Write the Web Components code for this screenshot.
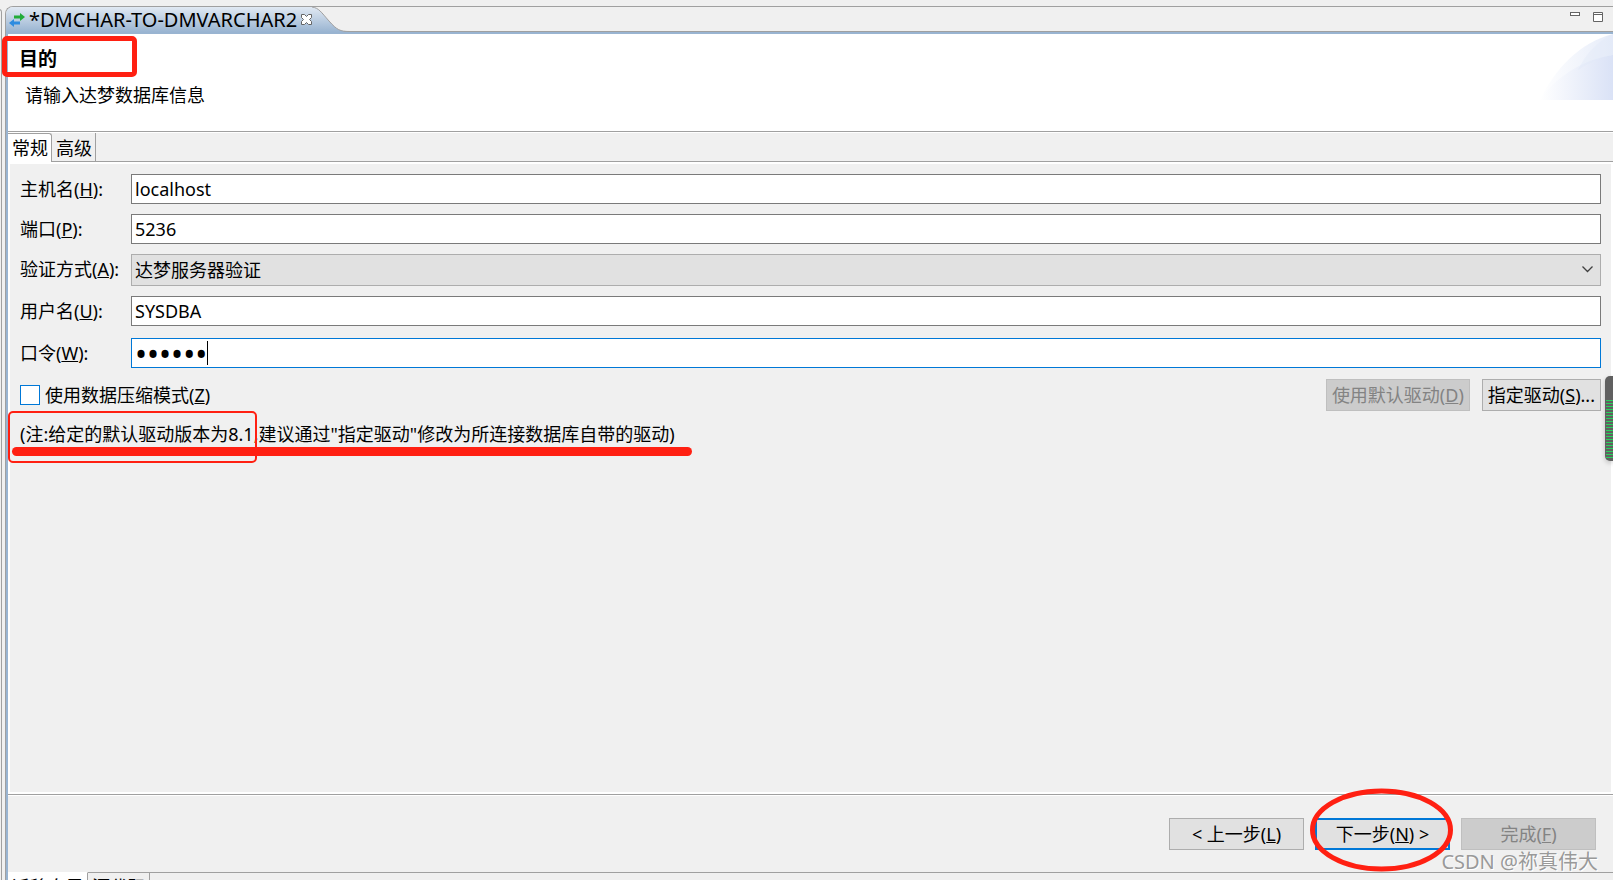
<!DOCTYPE html>
<html lang="zh-CN">
<head>
<meta charset="utf-8">
<title>DMCHAR-TO-DMVARCHAR2</title>
<style>
    html, body { height: 100%; }
    body {
        margin: 0;
        overflow: hidden;
        background: #f0f0f0;
        color: #000;
        font: 18px/24px "Noto Sans", "Noto Sans CJK SC", sans-serif;
    }
</style>
</head>
<body>
<wizard-window>
    <editor-tab slot="tab">*DMCHAR-TO-DMVARCHAR2</editor-tab>
    <wizard-header slot="header">
        <span slot="title">目的</span>
        请输入达梦数据库信息
    </wizard-header>
    <page-tabs slot="tabs"></page-tabs>
    <connection-form></connection-form>
    <wizard-footer slot="footer"></wizard-footer>
    <bottom-tabs slot="bottom"></bottom-tabs>
</wizard-window>

<script>
    class BaseElement extends HTMLElement {
        constructor() {
            super();
            this.attachShadow({ mode: 'open' });
            this.shadowRoot.innerHTML = this.render();
        }
    }

    class WizardWindow extends BaseElement {
        render() {
            return `
                <style>
                    :host {
                        display: flex;
                        position: relative;
                        height: 100%;
                        padding-top: 6px;
                        box-sizing: border-box;
                        overflow: hidden;
                    }
                    .edge {
                        width: 4px;
                        flex: none;
                        margin: 3px 0 0 -1px;
                        border-right: 1px solid #f0f0f0;
                        box-sizing: border-box;
                    }
                    .edge::before {
                        content: '';
                        display: block;
                        height: 100%;
                        border: 1px solid #a0a0a0;
                        border-left: 0;
                        border-radius: 0 4px 0 0;
                    }
                    .main {
                        flex: 1;
                        min-width: 0;
                        display: flex;
                        flex-direction: column;
                        margin-left: 2px;
                        border: 1px solid #a0a0a0;
                        border-width: 1px 0 0 1px;
                        border-radius: 8px 0 0 0;
                    }
                    .bar {
                        display: flex;
                        height: 25px;
                        justify-content: space-between;
                        box-shadow: inset 0 -1px #a0a0a0;
                    }
                    .tools {
                        display: flex;
                        gap: 13px;
                        padding: 5px 10px 0 0;
                    }
                    .frame {
                        flex: 1;
                        min-height: 0;
                        display: flex;
                        flex-direction: column;
                        border: solid #99b4d1;
                        border-width: 2px 0 0 2px;
                    }
                    .body {
                        flex: 1;
                        border: 2px solid #fff;
                    }
                    .grip {
                        position: absolute;
                        right: 0;
                        top: 376px;
                        width: 8px;
                        height: 85px;
                        box-sizing: border-box;
                        border-radius: 5px 0 0 5px;
                        padding: 24px 0 3px 1px;
                        background: #606060;
                        box-shadow: 0 2px 5px #0003;
                    }
                    .grip::before {
                        content: '';
                        display: block;
                        height: 100%;
                        background: repeating-linear-gradient(#28d05c 0 1px, #606060 1px 3px);
                    }
                </style>
                <div class="edge"></div>
                <div class="main">
                    <div class="bar">
                        <slot name="tab"></slot>
                        <div class="tools">
                            <svg width="10" height="10"><rect x=".5" y=".5" width="9" height="3" fill="#fff" stroke="#646464"/></svg>
                            <svg width="10" height="10"><path d="M.5.5h9v9h-9zM.5 2.500h9" fill="#fff" stroke="#646464"/></svg>
                        </div>
                    </div>
                    <div class="frame">
                        <slot name="header"></slot>
                        <slot name="tabs"></slot>
                        <div class="body"><slot></slot></div>
                        <slot name="footer"></slot>
                        <slot name="bottom"></slot>
                    </div>
                </div>
                <div class="grip"></div>
            `;
        }
    }

    class EditorTab extends BaseElement {
        render() {
            return `
                <style>
                    :host { display: flex; height: 25px; font-size: 20px; line-height: 22px; }
                    .label {
                        display: flex;
                        align-items: center;
                        gap: 4px;
                        padding-left: 3px;
                        border-radius: 7px 0 0 0;
                        background: linear-gradient(#e1e9f3, #99b4d1);
                        white-space: nowrap;
                    }
                    .curve { display: block; }
                </style>
                <div class="label">
                    <svg width="16" height="14" viewBox="0 0 16 14">
                        <path d="M5 2.500h6V0l5 4-5 4V5.500H5z" fill="#22ac38"/>
                        <path d="M11 8.500H5V6L0 10l5 4v-2.500h6z" fill="#2e8ce0"/>
                    </svg>
                    <span><slot></slot></span>
                    <svg width="11" height="11" viewBox="0 0 11 11">
                        <path d="M.5.5h3l2 2 2-2h3v3l-2 2 2 2v3h-3l-2-2-2 2h-3v-3l2-2-2-2z" fill="#fff" stroke="#646464"/>
                    </svg>
                </div>
                <svg class="curve" width="38" height="25" viewBox="0 0 38 25">
                    <defs>
                        <linearGradient id="g" x2="0" y2="1"><stop stop-color="#e1e9f3"/><stop offset="1" stop-color="#99b4d1"/></linearGradient>
                    </defs>
                    <path d="M0 0C7 1 9 5 17 14C25 23 28 24.500 38 24.500V25H0z" fill="url(#g)"/>
                    <path d="M0 0C7 1 9 5 17 14C25 23 28 24.500 38 24.500" fill="none" stroke="#a0a0a0"/>
                </svg>
            `;
        }
    }

    class WizardHeader extends BaseElement {
        render() {
            return `
                <style>
                    :host {
                        display: block;
                        position: relative;
                        height: 97px;
                        background: #fff;
                        border-bottom: 1px solid #a0a0a0;
                    }
                    h1 {
                        margin: 0;
                        padding: 13px 0 0 11px;
                        font-size: 19px;
                        line-height: 24px;
                    }
                    p { margin: 0; padding: 12px 0 0 17px; }
                    .mark {
                        position: absolute;
                        left: -6px;
                        top: 2px;
                        width: 135px;
                        height: 41px;
                        box-sizing: border-box;
                        border: 5px solid #ff2012;
                        border-radius: 5px;
                        z-index: 1;
                    }
                    .banner { position: absolute; right: 0; top: 0; }
                </style>
                <h1><slot name="title"></slot></h1>
                <p><slot></slot></p>
                <div class="mark"></div>
                <svg class="banner" width="73" height="66" viewBox="0 0 73 66">
                    <defs>
                        <linearGradient id="a"><stop stop-color="#fff"/><stop offset="1" stop-color="#e6ecf9"/></linearGradient>
                        <linearGradient id="b"><stop stop-color="#fff"/><stop offset="1" stop-color="#dae2f6"/></linearGradient>
                    </defs>
                    <path d="M0 66C14 36 40 8 73 0V66z" fill="url(#a)"/>
                    <path d="M0 66C18 40 46 25 73 21V66z" fill="url(#b)"/>
                    <path d="M38 36C46 20 56 8 73 0V21Q54 25 38 36z" fill="#e2e9f8" opacity=".4"/>
                </svg>
            `;
        }
    }

    class PageTabs extends BaseElement {
        render() {
            return `
                <style>
                    :host {
                        display: flex;
                        background: #f0f0f0;
                        border-top: 1px solid #fff;
                        box-shadow: inset 0 -1px #a0a0a0;
                    }
                    button {
                        height: 29px;
                        padding: 0 3px 0 4px;
                        border: 0;
                        border-right: 1px solid #a0a0a0;
                        background: none;
                        font: inherit;
                    }
                    .active {
                        background: #fff;
                        border-top: 1px solid #a0a0a0;
                        border-radius: 0 3px 0 0;
                    }
                </style>
                <button class="active">常规</button>
                <button>高级</button>
            `;
        }
    }

    class ConnectionForm extends BaseElement {
        render() {
            return `
                <style>
                    :host { display: block; height: 100%; background: #f0f0f0; }
                    form {
                        display: grid;
                        grid-template-columns: 101px 1fr;
                        grid-template-rows: 30px 30px 32px 32px 31px 32px;
                        gap: 10px;
                        padding: 10px 10px 0;
                    }
                    label { line-height: 30px; white-space: nowrap; }
                    input, select, button, .password {
                        box-sizing: border-box;
                        margin: 0;
                        border: 1px solid #7a7a7a;
                        border-radius: 0;
                        font: inherit;
                        color: inherit;
                        outline: 0;
                    }
                    .text, .password {
                        width: 100%;
                        height: 30px;
                        padding: 0 3px;
                        background: #fff;
                    }
                    .password { display: flex; align-items: center; border-color: #0078d7; }
                    .password input {
                        width: 73px;
                        height: 24px;
                        padding: 0;
                        border: 0;
                        border-right: 1px solid #000;
                        background: none;
                        font-size: 32px;
                    }
                    .combo { position: relative; }
                    select {
                        appearance: none;
                        width: 100%;
                        height: 32px;
                        padding: 0 3px;
                        border-color: #adadad;
                        background: #e1e1e1;
                    }
                    .combo svg { position: absolute; right: 8px; top: 12px; }
                    .options {
                        grid-column: 1 / -1;
                        display: flex;
                        align-items: center;
                    }
                    .options label { display: flex; align-items: center; gap: 5px; margin-right: auto; }
                    .options input {
                        appearance: none;
                        width: 20px;
                        height: 20px;
                        border-color: #0078d7;
                        background: #fff;
                    }
                    button {
                        height: 32px;
                        margin-left: 12px;
                        padding: 0 5px;
                        border-color: #adadad;
                        background: #e1e1e1;
                    }
                    button:disabled { color: #838383; border-color: #bfbfbf; background: #ccc; }
                    .note {
                        grid-column: 1 / -1;
                        position: relative;
                        margin: 0;
                        line-height: 26px;
                        white-space: nowrap;
                    }
                    .box {
                        position: absolute;
                        left: -12px;
                        top: -10px;
                        width: 249px;
                        height: 52px;
                        box-sizing: border-box;
                        border: 2px solid #ff2012;
                        border-radius: 5px;
                    }
                    .line {
                        position: absolute;
                        left: -8px;
                        top: 26px;
                        width: 680px;
                        height: 9px;
                        border-radius: 5px;
                        background: #ff2012;
                    }
                </style>
                <form>
                    <label for="host">主机名(<u>H</u>):</label>
                    <input class="text" id="host" value="localhost">
                    <label for="port">端口(<u>P</u>):</label>
                    <input class="text" id="port" value="5236">
                    <label for="auth">验证方式(<u>A</u>):</label>
                    <div class="combo">
                        <select id="auth"><option>达梦服务器验证</option></select>
                        <svg width="11" height="7" viewBox="0 0 11 7"><path d="M.5.5l5 5 5-5" fill="none" stroke="#404040" stroke-width="1.300"/></svg>
                    </div>
                    <label for="user">用户名(<u>U</u>):</label>
                    <input class="text" id="user" value="SYSDBA">
                    <label for="pwd">口令(<u>W</u>):</label>
                    <div class="password"><input type="password" id="pwd" value="SYSDBA"></div>
                    <div class="options">
                        <label><input type="checkbox"><span>使用数据压缩模式(<u>Z</u>)</span></label>
                        <button type="button" disabled>使用默认驱动(<u>D</u>)</button>
                        <button type="button">指定驱动(<u>S</u>)...</button>
                    </div>
                    <p class="note">
                        (注:给定的默认驱动版本为8.1,建议通过"指定驱动"修改为所连接数据库自带的驱动)
                        <span class="box"></span>
                        <span class="line"></span>
                    </p>
                </form>
            `;
        }
    }

    class WizardFooter extends BaseElement {
        render() {
            return `
                <style>
                    :host {
                        display: flex;
                        position: relative;
                        justify-content: flex-end;
                        gap: 11px;
                        padding: 23px 17px 22px 0;
                        background: #f0f0f0;
                        border-top: 1px solid #a0a0a0;
                        box-shadow: inset 0 1px #fff;
                    }
                    button {
                        width: 135px;
                        height: 32px;
                        padding: 0;
                        border: 1px solid #adadad;
                        background: #e1e1e1;
                        font: inherit;
                        color: inherit;
                    }
                    button:disabled { color: #838383; border-color: #bfbfbf; background: #ccc; }
                    .next { position: relative; }
                    .next button { border: 2px solid #0078d7; }
                    .next svg { position: absolute; left: -5px; top: -30px; }
                    .watermark {
                        position: absolute;
                        right: 15px;
                        bottom: -4px;
                        font-size: 20px;
                        line-height: 28px;
                        color: #999;
                        text-shadow: 1px 1px #fff;
                        z-index: 1;
                    }
                </style>
                <button>&lt; 上一步(<u>L</u>)</button>
                <div class="next">
                    <button>下一步(<u>N</u>) &gt;</button>
                    <svg width="143" height="84"><ellipse cx="71.500" cy="42" rx="69" ry="39" fill="none" stroke="#ff2012" stroke-width="5"/></svg>
                </div>
                <button disabled>完成(<u>F</u>)</button>
                <span class="watermark">CSDN @祢真伟大</span>
            `;
        }
    }

    class BottomTabs extends BaseElement {
        render() {
            return `
                <style>
                    :host { display: flex; height: 8px; overflow: hidden; background: #f0f0f0; }
                    button {
                        flex: none;
                        height: 28px;
                        padding: 0 3px 0 4px;
                        border: 1px solid #a0a0a0;
                        border-width: 1px 1px 0 0;
                        background: none;
                        font: inherit;
                    }
                    .active { background: #fff; border-top-color: #fff; }
                    .rest { flex: 1; border-top: 1px solid #a0a0a0; }
                </style>
                <button class="active">迁移向导</button>
                <button>源代码</button>
                <div class="rest"></div>
            `;
        }
    }

    customElements.define('wizard-window', WizardWindow);
    customElements.define('editor-tab', EditorTab);
    customElements.define('wizard-header', WizardHeader);
    customElements.define('page-tabs', PageTabs);
    customElements.define('connection-form', ConnectionForm);
    customElements.define('wizard-footer', WizardFooter);
    customElements.define('bottom-tabs', BottomTabs);
</script>
</body>
</html>
